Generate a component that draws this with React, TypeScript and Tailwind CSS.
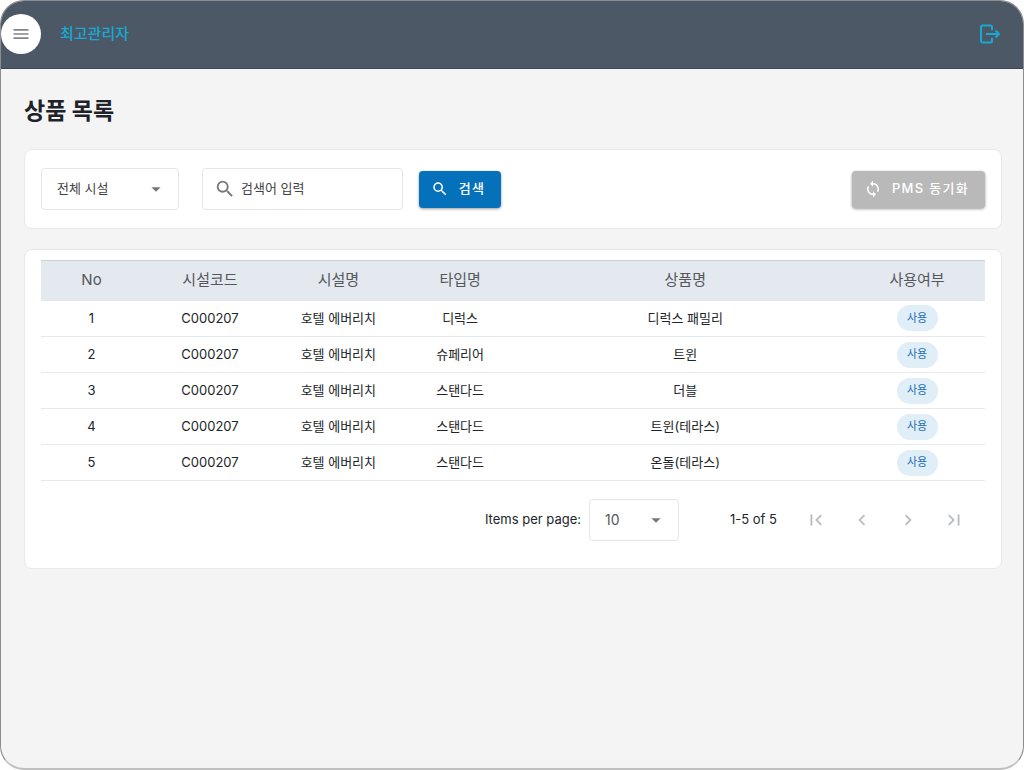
import type { ReactNode } from "react";
import {
  MdArrowDropDown,
  MdChevronLeft,
  MdChevronRight,
  MdFirstPage,
  MdLastPage,
  MdMenu,
  MdSearch,
  MdSync,
} from "react-icons/md";

const products = [
  { no: 1, code: "C000207", facility: "호텔 에버리치", type: "디럭스", name: "디럭스 패밀리" },
  { no: 2, code: "C000207", facility: "호텔 에버리치", type: "슈페리어", name: "트윈" },
  { no: 3, code: "C000207", facility: "호텔 에버리치", type: "스탠다드", name: "더블" },
  { no: 4, code: "C000207", facility: "호텔 에버리치", type: "스탠다드", name: "트윈(테라스)" },
  { no: 5, code: "C000207", facility: "호텔 에버리치", type: "스탠다드", name: "온돌(테라스)" },
];

const columns = [
  { label: "No", width: "w-[10.7%]" },
  { label: "시설코드", width: "w-[14.4%]" },
  { label: "시설명", width: "w-[12.8%]" },
  { label: "타입명", width: "w-[13%]" },
  { label: "상품명", width: "w-[34.7%]" },
  { label: "사용여부", width: "w-[14.4%]" },
];

function LogoutIcon() {
  return (
    <svg width="22" height="22" viewBox="0 0 22 22" fill="none" stroke="currentColor" strokeWidth="2" aria-hidden="true">
      <path d="M13 7V4a1.500 1.500 0 0 0-1.500-1.500H3.500A1.500 1.500 0 0 0 2 4v14a1.500 1.500 0 0 0 1.500 1.500h8A1.500 1.500 0 0 0 13 18v-3" />
      <path d="M7 11h13M16.500 7.500L20 11l-3.500 3.500" />
    </svg>
  );
}

function Card({ className, children }: { className: string; children: ReactNode }) {
  return <section className={`rounded-lg border border-[#e4e9ed] bg-white px-4 ${className}`}>{children}</section>;
}

function PageButton({ label, children }: { label: string; children: ReactNode }) {
  return (
    <button type="button" disabled aria-label={label} className="flex size-[22px] items-center justify-center text-[#b9bcbf]">
      {children}
    </button>
  );
}

export default function App() {
  return (
    <div className="flex min-h-screen flex-col bg-white font-['Inter','Noto_Sans_CJK_KR',sans-serif] text-[13px] text-[#212529]">
      <div className="flex grow flex-col overflow-hidden rounded-[24px] border border-b-2 border-[#8c8c8c] border-b-[#c0c0c0] bg-[#f4f4f4]">
        <header className="flex h-[68px] items-center justify-between border-b border-[#3c4858] bg-[#4d5866] pb-0.5 pr-[22px]">
          <div className="flex items-center gap-[19px]">
            <button type="button" aria-label="메뉴" className="flex size-10 items-center justify-center rounded-full bg-white text-[#858585]">
              <MdMenu size={20} />
            </button>
            <span className="text-[15px] font-medium leading-5 text-[#16a9d4]">최고관리자</span>
          </div>
          <button type="button" aria-label="로그아웃" className="text-[#16a9d4]">
            <LogoutIcon />
          </button>
        </header>

        <main className="flex flex-col pl-[23px] pr-[21px] pt-[26px]">
          <h1 className="mb-[22px] text-[23px] font-bold leading-8 text-[#1e2229]">상품 목록</h1>

          <Card className="mb-5 flex h-20 items-center">
            <div className="relative">
              <select aria-label="시설" className="h-[42px] w-[138px] appearance-none rounded border border-[#e1e7ec] bg-white pl-[15px] pr-8 text-[13px] text-[#3f4347]">
                <option>전체 시설</option>
              </select>
              <MdArrowDropDown size={22} className="pointer-events-none absolute right-3 top-2.5 text-[#757575]" />
            </div>
            <label className="ml-[23px] flex h-[42px] w-[201px] items-center gap-[5px] rounded border border-[#e1e7ec] bg-white px-[11px]">
              <MdSearch size={22} className="shrink-0 text-[#777]" />
              <input type="text" aria-label="검색어" placeholder="검색어 입력" className="w-full min-w-0 bg-transparent text-[13px] outline-none placeholder:text-[#3f4347]" />
            </label>
            <button type="button" className="ml-4 flex h-[37px] w-[82px] items-center justify-center gap-2.5 rounded bg-[#0571bb] pr-1 font-medium tracking-widest text-white shadow-[0_1px_3px_rgba(0,0,0,0.4)]">
              <MdSearch size={18} />
              검색
            </button>
            <button type="button" className="ml-auto flex h-[37px] w-[133px] items-center justify-center gap-2.5 rounded bg-[#b9b9b9] pr-1 font-medium tracking-widest text-white shadow-[0_1px_3px_rgba(0,0,0,0.4)]">
              <MdSync size={18} />
              PMS 동기화
            </button>
          </Card>

          <Card className="pb-[27px] pt-2.5">
            <table className="w-full table-fixed border-collapse text-center">
              <thead>
                <tr className="h-10 border-t border-[#c8d0d6] bg-[#e4e8ef] text-[15px] text-[#54585d]">
                  {columns.map((column) => (
                    <th key={column.label} scope="col" className={`${column.width} p-0 pb-0.5 font-normal`}>
                      {column.label}
                    </th>
                  ))}
                </tr>
              </thead>
              <tbody>
                {products.map((product) => (
                  <tr key={product.no} className="h-9 border-b border-[#e4e9ed]">
                    <td>{product.no}</td>
                    <td>{product.code}</td>
                    <td>{product.facility}</td>
                    <td>{product.type}</td>
                    <td>{product.name}</td>
                    <td>
                      <span className="inline-flex h-[26px] w-[41px] items-center justify-center rounded-full bg-[#e0eef8] align-middle text-[11px] text-[#1b70b3]">
                        사용
                      </span>
                    </td>
                  </tr>
                ))}
              </tbody>
            </table>

            <div className="mt-[18px] flex items-center justify-end pr-5">
              <label htmlFor="page-size" className="mr-2">Items per page:</label>
              <div className="relative">
                <select id="page-size" className="h-[42px] w-[90px] appearance-none rounded border border-[#e1e7ec] bg-white pl-[15px] text-sm text-[#54585d]">
                  <option>10</option>
                </select>
                <MdArrowDropDown size={22} className="pointer-events-none absolute right-3 top-2.5 text-[#757575]" />
              </div>
              <span className="ml-[51px]">1-5 of 5</span>
              <nav aria-label="페이지 이동" className="ml-7 flex gap-6">
                <PageButton label="첫 페이지"><MdFirstPage size={24} /></PageButton>
                <PageButton label="이전 페이지"><MdChevronLeft size={24} /></PageButton>
                <PageButton label="다음 페이지"><MdChevronRight size={24} /></PageButton>
                <PageButton label="마지막 페이지"><MdLastPage size={24} /></PageButton>
              </nav>
            </div>
          </Card>
        </main>
      </div>
    </div>
  );
}
